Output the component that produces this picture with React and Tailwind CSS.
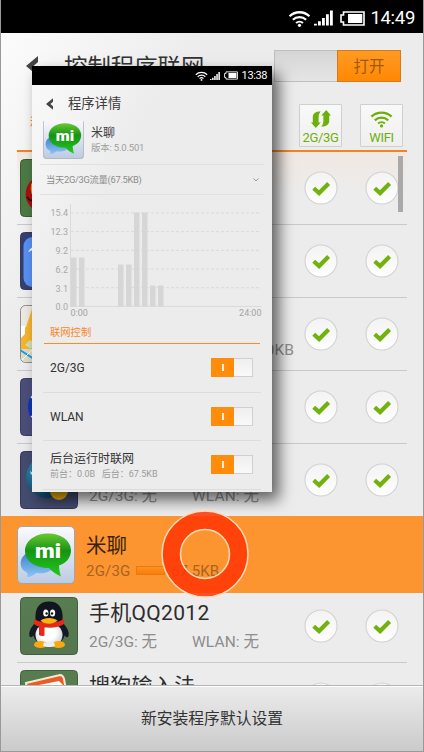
import React from "react";

function Wifi({ className }) {
  return (
    <svg viewBox="0 0 24 18" className={className} fill="none" stroke="currentColor">
      <path d="M1.5 6.6a15.2 15.2 0 0 1 21 0" strokeWidth="2.4" />
      <path d="M5 10.4a10 10 0 0 1 14 0" strokeWidth="2.3" />
      <path d="M8.4 13.8a5.2 5.2 0 0 1 7.2 0" strokeWidth="2.2" />
      <circle cx="12" cy="16.2" r="1.7" fill="currentColor" stroke="none" />
    </svg>
  );
}

function Signal({ className }) {
  return (
    <svg viewBox="0 0 20 16" className={className} fill="currentColor">
      <path d="M0 14h3v2H0zM4.2 11.5h3V16h-3zM8.4 8h3v8h-3zM12.6 4h3v12h-3zM16.8 0h3v16h-3z" />
    </svg>
  );
}

function Battery({ className }) {
  return (
    <svg viewBox="0 0 25 15" className={className} fill="none">
      <path d="M3.5 1h20.5v13H3.5v-3H1V4h2.5z" stroke="#fff" strokeWidth="1.6" />
      <path d="M8 3h14.3v9H8z" fill="#fff" />
    </svg>
  );
}

function Back({ className }) {
  return (
    <svg viewBox="0 0 12 20" className={className} fill="#444">
      <path d="M12 0v6L7.5 10l4.5 4v6L0 10z" />
    </svg>
  );
}

function CheckMark() {
  return (
    <svg viewBox="-17 -17 34 34" className="size-[34px] shrink-0">
      <defs>
        <linearGradient id="knob" x1="0" y1="0" x2="0" y2="1">
          <stop offset="0" stopColor="#f3f3f3" />
          <stop offset="1" stopColor="#fefefe" />
        </linearGradient>
      </defs>
      <circle r="16" fill="url(#knob)" stroke="#d2d2d2" strokeWidth="1.1" />
      <path d="M-7.3 .3L-1.9 5.1L7.6-4.4" fill="none" stroke="#72b20c" strokeWidth="4.2" />
    </svg>
  );
}

function MiIcon({ className }) {
  return (
    <svg viewBox="0 0 58 58" className={className}>
      <defs>
        <linearGradient id="miBg" x1="0" y1="0" x2="0" y2="1">
          <stop offset="0" stopColor="#fbfbfd" />
          <stop offset="1" stopColor="#bccbe2" />
        </linearGradient>
        <linearGradient id="miGreen" x1="0" y1="0" x2="0" y2="1">
          <stop offset="0" stopColor="#6ac832" />
          <stop offset=".4" stopColor="#159414" />
          <stop offset="1" stopColor="#25c81d" />
        </linearGradient>
        <linearGradient id="miBlue" x1="0" y1="0" x2="0" y2="1">
          <stop offset="0" stopColor="#3f82cd" />
          <stop offset="1" stopColor="#8cc4f3" />
        </linearGradient>
      </defs>
      <rect x=".5" y=".5" width="57" height="57" rx="4.5" fill="url(#miBg)" stroke="#a1a6ae" />
      <path d="M10 27C3 31 2 39 6 44c3 2 6 3 4 7 4 0 7-2 9-4 8 1 15-1 17-5z" fill="url(#miBlue)" />
      <path d="M31 7.500c13 0 23 7 23 17 0 7-5 13-12 15 0 4 1 8 2 11-5-2-9-5-12-8.500C18 42 8 35 8 25 8 15 18 7.500 31 7.500z" fill="url(#miGreen)" />
      <text x="18" y="32" fontSize="19.5" fontWeight="900" fill="#fff" fontFamily="Roboto, sans-serif" textLength="26" lengthAdjust="spacingAndGlyphs">mi</text>
    </svg>
  );
}

function QQIcon() {
  return (
    <svg viewBox="0 0 58 58" className="size-[58px] shrink-0">
      <defs>
        <linearGradient id="qqBg" x1="0" y1="0" x2="0" y2="1">
          <stop offset="0" stopColor="#577d4f" />
          <stop offset="1" stopColor="#557650" />
        </linearGradient>
        <radialGradient id="belly" cx=".45" cy=".4" r=".6">
          <stop offset=".5" stopColor="#fff" />
          <stop offset="1" stopColor="#ccd2da" />
        </radialGradient>
      </defs>
      <rect x=".5" y=".5" width="57" height="57" rx="4" fill="url(#qqBg)" stroke="#455e42" />
      <path d="M15 26c-5 5-7 11-5 14 2 1 4-2 6-4zM43 26c5 5 7 11 5 14-2 1-4-2-6-4z" fill="#151a24" />
      <ellipse cx="29" cy="35" rx="16" ry="14.500" fill="#151a24" />
      <ellipse cx="29" cy="38" rx="13.500" ry="12" fill="url(#belly)" />
      <ellipse cx="20.500" cy="47.500" rx="6.500" ry="3.600" fill="#f9a80d" />
      <ellipse cx="38.500" cy="47.500" rx="6.500" ry="3.600" fill="#f9a80d" />
      <path d="M24 45q5 3 10 0l1 4q-6 2-12 0z" fill="#eef0f3" />
      <path d="M15.500 23C14.500 10 20 4.500 29 4.500S43.500 10 42.500 23c-1 8-26 8-27 0z" fill="#10151f" />
      <ellipse cx="25.800" cy="16" rx="2.600" ry="3.600" fill="#fff" />
      <ellipse cx="32.600" cy="16" rx="2.600" ry="3.600" fill="#fff" />
      <circle cx="26.600" cy="16.500" r="1.200" fill="#111" />
      <circle cx="32" cy="16.500" r="1.200" fill="#111" />
      <path d="M14.500 22c7 5 22 5 29 0l1 4.500c-5 4-12 4.500-20 4v8c-2 1-4 .5-5.500-.5v-8.500c-3-1-5-2-5.500-3.500z" fill="#e32b17" />
      <path d="M20.500 23.500c4-3.500 13-3.500 17 0-3 4-13 4.500-17 0z" fill="#f9b20f" />
    </svg>
  );
}

function SogouIcon() {
  return (
    <svg viewBox="0 0 58 58" className="size-[58px] shrink-0">
      <rect x=".5" y=".5" width="57" height="57" rx="4" fill="#577d4f" stroke="#455e42" />
      <path d="M6 13L40 5q3 0 4 4l8 44-38 4z" fill="#ed5a22" stroke="#f6e9dc" strokeWidth="2" />
      <path d="M14 16l25-5 4 4 1 30-30 2z" fill="#fff" />
    </svg>
  );
}

function GameIcon() {
  return (
    <svg viewBox="0 0 58 58" className="size-[58px] shrink-0">
      <rect x=".5" y=".5" width="57" height="57" rx="4" fill="#4c7a45" stroke="#3c5a38" />
      <circle cx="24" cy="35" r="18.500" fill="#a81010" />
      <path d="M11 25q12-12 16 2l-10 12q-8-2-6-14z" fill="#f39a11" />
      <path d="M7 38q4 6 8 2" stroke="#3c0505" strokeWidth="2" fill="none" />
    </svg>
  );
}

function BlueIcon() {
  return (
    <svg viewBox="0 0 58 58" className="size-[58px] shrink-0">
      <rect x=".5" y=".5" width="57" height="57" rx="4" fill="#373f6f" stroke="#363a5e" />
      <rect x="3.5" y="5" width="50" height="50" rx="9" fill="#5791f3" />
      <path d="M8 20q3-6 12-8v6q-7-1-12 2z" fill="#fff" />
    </svg>
  );
}

function MapIcon() {
  return (
    <svg viewBox="0 0 58 58" className="size-[58px] shrink-0">
      <clipPath id="mapClip"><rect x="1" y="1" width="56" height="56" rx="5" /></clipPath>
      <rect x=".5" y=".5" width="57" height="57" rx="5" fill="#eceae2" stroke="#8e8e8e" />
      <g clipPath="url(#mapClip)">
        <path d="M0 26L6 22 12 4l5-4v45L0 44z" fill="#f6b52c" />
        <path d="M0 21h5v8l-5 5z" fill="#fff" />
        <path d="M5 40l5-5 5 3-4 6z" fill="#d2e0b6" />
        <path d="M0 44h14v14H0z" fill="#dbdcc9" />
        <path d="M0 45l14 9" stroke="#1f9be0" strokeWidth="1.8" />
        <path d="M1 56L14 43" stroke="#fff" strokeWidth="1" />
      </g>
    </svg>
  );
}

function BallIcon() {
  return (
    <svg viewBox="0 0 58 58" className="size-[58px] shrink-0">
      <rect x=".5" y=".5" width="57" height="57" rx="4" fill="#4b4e79" stroke="#3a3d60" />
      <circle cx="30" cy="29" r="22" fill="#0d35b4" />
      <path d="M11 20l2-3M11 38l2 2" stroke="#d8e4ff" strokeWidth="1.5" />
    </svg>
  );
}

function GlobeIcon() {
  return (
    <svg viewBox="0 0 58 58" className="size-[58px] shrink-0">
      <defs>
        <radialGradient id="globe" cx=".4" cy=".3" r=".7">
          <stop offset="0" stopColor="#3aa0c8" />
          <stop offset="1" stopColor="#114a70" />
        </radialGradient>
      </defs>
      <rect x=".5" y=".5" width="57" height="57" rx="4" fill="#444c70" stroke="#34395a" />
      <circle cx="27" cy="26" r="21" fill="url(#globe)" />
      <circle cx="39" cy="40" r="9" fill="#f3b70b" />
      <path d="M10 20l3 2-2 2z" fill="#cfe9f2" />
    </svg>
  );
}

function AppRow({ icon, title, meta, extra }) {
  return (
    <div className="flex h-[73px] shrink-0 items-start border-b border-[#c9c9c9] pt-[7px]">
      <div className="ml-[2.500px] flex">{icon}</div>
      <div className="ml-[11.500px] flex w-[215px] flex-col whitespace-nowrap">
        <div className="h-[32px] text-[21px] leading-[32px] tracking-[0.3px] text-[#2c2c2c]">{title}</div>
        <div className="flex h-[26px] text-[15.5px] leading-[26px] text-[#8d8d8d]">
          <span className="w-[103px]">{meta}</span>
          <span className="tracking-[0.1px]">{extra}</span>
        </div>
      </div>
      <div className="mt-[12px] flex gap-[27px]">
        <CheckMark />
        <CheckMark />
      </div>
    </div>
  );
}

function Pick({ label, children }) {
  return (
    <div className="flex h-[43px] w-[43px] flex-col items-center rounded-[1px] border border-[#cfcfcf] bg-linear-to-b from-[#f9f9f9] to-[#efefef] text-[#6db00c]">
      <div className="flex h-[25px] items-end">{children}</div>
      <div className="text-[13px] leading-[17px] tracking-[-0.3px]">{label}</div>
    </div>
  );
}

const BARS = [
  [39, 49], [47, 49], [86, 42], [94, 42], [102, 94], [110, 94], [118, 21], [126, 21],
];
const TICKS = ["15.4", "12.3", "9.2", "6.2", "3.1", "0.0"];

function Chart() {
  return (
    <svg viewBox="0 0 240 128" className="h-[128px] w-[240px] shrink-0" fontFamily="Roboto, sans-serif">
      <path d="M38.5 9v103" stroke="#dadada" />
      {TICKS.map((t, i) => (
        <g key={t}>
          <text x="36" y={21.3 + i * 18.8} textAnchor="end" fontSize="9" fill="#a9a9a9">{t}</text>
          <path d={`M39 ${17.9 + i * 18.7}H229`} stroke="#d9d9d9" strokeDasharray={i === 5 ? "none" : "3 2"} />
        </g>
      ))}
      {BARS.map(([x, h]) => (
        <rect key={x} x={x} y={111.5 - h} width="5.5" height={h} fill="#d6d6d6" />
      ))}
      <text x="38.5" y="120.5" fontSize="9" fill="#a3a3a3">0:00</text>
      <text x="229.5" y="120.5" textAnchor="end" fontSize="9" fill="#a3a3a3">24:00</text>
    </svg>
  );
}

function Switch() {
  return (
    <div className="flex h-[19px] w-[42px] border border-[#d0d0d0] bg-linear-to-b from-[#efefef] to-[#f9f9f9]">
      <div className="-my-px -ml-px flex w-[23px] items-center justify-center bg-[#ff8d0b]">
        <div className="h-[7px] w-[2px] bg-[#fff3df]" />
      </div>
    </div>
  );
}

function SettingRow({ title, detail }) {
  return (
    <div className="flex h-[48.5px] shrink-0 items-center justify-between border-b border-[#dcdcdc] pr-[8px] pl-[7px]">
      <div className="pt-[2px] whitespace-nowrap">
        <div className="text-[12px] leading-[17px] text-[#333]">{title}</div>
        {detail && <div className="text-[9px] leading-[13px] text-[#9b9b9b]">{detail}</div>}
      </div>
      <Switch />
    </div>
  );
}

function Popup() {
  return (
    <div className="absolute top-[66px] left-[31px] z-20 flex h-[426px] w-[240px] flex-col overflow-hidden bg-[#ececec] bg-linear-to-br from-[#fafafa] via-[#ececec] via-30% to-[#ececec]">
      <div className="flex h-[19px] shrink-0 items-center justify-end bg-black pr-[5px] text-white">
        <Wifi className="h-[10px] w-[13px]" />
        <Signal className="mr-[4px] ml-[2px] h-[8px] w-[10px]" />
        <Battery className="mr-[4px] h-[9px] w-[14px]" />
        <span className="text-[11px] leading-none tracking-[-0.4px]">13:38</span>
      </div>
      <div className="flex h-[36px] shrink-0 items-center pt-[2px] pl-[14px]">
        <Back className="h-[12px] w-[7px]" />
        <span className="ml-[15px] text-[13.3px] leading-none text-[#3d3d3d]">程序详情</span>
      </div>
      <div className="flex h-[43px] shrink-0">
        <div className="ml-[11px] flex h-[38px] w-[41px] items-end overflow-hidden">
          <MiIcon className="h-[41px] w-[41px] shrink-0" />
        </div>
        <div className="ml-[7px] pt-[4px]">
          <div className="text-[12px] leading-[17px] text-[#444]">米聊</div>
          <div className="text-[9.5px] leading-[12px] tracking-[-0.2px] text-[#a0a0a0]">版本: 5.0.501</div>
        </div>
      </div>
      <div className="mx-[8px] flex h-[31px] shrink-0 items-center justify-between border-y border-[#e0e0e0] pr-[5px] pl-[6px] text-[9.3px] text-[#8c8c8c]">
        <span className="tracking-[-0.28px]">当天2G/3G流量(67.5KB)</span>
        <svg viewBox="0 0 6 4" className="h-[4px] w-[6px]"><path d="M.5 .5L3 3L5.5 .5" fill="none" stroke="#999" /></svg>
      </div>
      <Chart />
      <div className="ml-[12px] flex h-[19.500px] w-[217px] shrink-0 items-center pl-[6px] text-[10.3px] text-[#f7892c]">联网控制</div>
      <div className="ml-[12px] h-[1.500px] w-[216px] shrink-0 bg-[#ff8a24]" />
      <div className="ml-[11px] flex w-[218px] shrink-0 flex-col">
        <SettingRow title="2G/3G" />
        <SettingRow title="WLAN" />
        <SettingRow title="后台运行时联网" detail={"前台：0.0B\u00a0\u00a0 后台：67.5KB"} />
      </div>
    </div>
  );
}

export default function App() {
  return (
    <div className="relative flex h-[752px] w-[424px] flex-col overflow-hidden border-x border-b border-[#999] bg-[#ececec] font-['Roboto','Noto_Sans_CJK_SC',sans-serif]">
      <div className="flex h-[33px] shrink-0 items-center justify-end bg-black pr-[8px] pt-[3px] text-white">
        <Wifi className="h-[17px] w-[23px]" />
        <Signal className="ml-[3px] h-[16px] w-[19px]" />
        <Battery className="ml-[7px] h-[15px] w-[25px]" />
        <span className="ml-[5px] text-[18.5px] leading-none tracking-[-0.3px]">14:49</span>
      </div>
      <div className="flex h-[652px] shrink-0 flex-col overflow-hidden bg-linear-to-br from-[#fcfcfc] via-[#ececec] via-25% to-[#ececec]">
        <div className="flex h-[66px] shrink-0 items-center pr-[22px] pl-[25px]">
          <Back className="h-[20px] w-[12px]" />
          <span className="ml-[26px] pt-[5px] text-[23.4px] leading-none whitespace-nowrap text-[#333]">控制程序联网</span>
          <div className="ml-auto flex h-[32px] w-[127px] border border-[#bebebe] bg-linear-to-b from-[#d5d5d5] to-[#e5e5e5]">
            <div className="-my-px -mr-px ml-auto flex w-[64px] items-center justify-center border border-[#d87a18] bg-linear-to-b from-[#ff9a22] to-[#ff8800] pt-[4px] text-[15.5px] leading-none text-[#a2590c]">打开</div>
          </div>
        </div>
        <div className="mx-[16px] flex h-[53px] shrink-0 border-b-2 border-[#f5841c] pt-[5px]">
          <span className="ml-[13px] pt-[8px] text-[15px] leading-[22px] text-[#f5841c]">程序</span>
          <div className="ml-auto flex gap-[18px] pr-[4px]">
            <Pick label="2G/3G">
              <svg viewBox="0 0 20 18" className="mb-px h-[18px] w-[20px]" fill="currentColor">
                <path d="M4.800 18L0 12.500H1.800V7C1.800 3.500 4.500 1.500 9.700 1.500C8 3.500 7.600 5 7.600 7.500V12.500H9.700z" />
                <path d="M15.200 0L20 5.500H18.200V11C18.200 14.500 15.500 16.500 10.300 16.500C12 14.500 12.400 13 12.400 10.500V5.500H10.300z" />
              </svg>
            </Pick>
            <Pick label="WIFI">
              <Wifi className="mb-px h-[18px] w-[23px]" />
            </Pick>
          </div>
        </div>
        <div className="relative mx-[16px] flex flex-col bg-linear-to-b from-[#f1e8e1] to-transparent to-[40px]">
          <div className="absolute top-[4px] right-[4px] h-[56px] w-[5px] bg-[#a9a9a9]" />
          <AppRow icon={<GameIcon />} title="" />
          <AppRow icon={<BlueIcon />} title="" />
          <AppRow icon={<MapIcon />} title="" extra={<span className="ml-[59px] inline-block w-[43px] text-right">.0KB</span>} />
          <AppRow icon={<BallIcon />} title="" />
          <AppRow icon={<GlobeIcon />} title="" meta="2G/3G: 无" extra="WLAN: 无" />
          <div className="relative z-10 -mx-[16px] -mt-px -mb-[3px] flex h-[77px] shrink-0 items-center bg-[#fc9530] pl-[16px]">
            <MiIcon className="size-[58px] shrink-0" />
            <div className="ml-[11px] pt-[6px] whitespace-nowrap">
              <div className="h-[28px] text-[20.5px] leading-[28px] text-[#3b230b]">米聊</div>
              <div className="flex h-[24px] items-center text-[15px] text-[#a86322]">
                <span className="w-[50px] tracking-[0.2px]">2G/3G</span>
                <div className="-mt-[2px] h-[9px] w-[29px] border border-[#e47b14] bg-linear-to-b from-[#ff9020] to-[#fb7d02]" />
                <span className="ml-[6px]">67.5KB</span>
              </div>
            </div>
            <svg viewBox="0 0 90 90" className="absolute -top-[7px] left-[159px] size-[90px]">
              <circle cx="45" cy="45" r="33.7" fill="none" stroke="#ff3606" strokeOpacity=".86" strokeWidth="18" />
              <circle cx="45" cy="45" r="43" fill="none" stroke="#ffdcb8" strokeWidth="1.5" />
              <circle cx="45" cy="45" r="24.5" fill="none" stroke="#ffdcb8" strokeWidth="1.5" />
            </svg>
          </div>
          <AppRow icon={<QQIcon />} title="手机QQ2012" meta="2G/3G: 无" extra="WLAN: 无" />
          <AppRow icon={<SogouIcon />} title="搜狗输入法" />
        </div>
      </div>
      <div className="flex h-[67px] shrink-0 items-center justify-center border-t border-[#b5b5b5] bg-linear-to-b from-[#ececec] to-[#cacaca] text-[15.8px] text-[#333] shadow-[inset_0_1px_0_#fff]">新安装程序默认设置</div>
      <div className="absolute top-[66px] left-[31px] h-[426px] w-[240px] shadow-[7px_8px_14px_rgba(0,0,0,0.6)]" />
      <Popup />
    </div>
  );
}
